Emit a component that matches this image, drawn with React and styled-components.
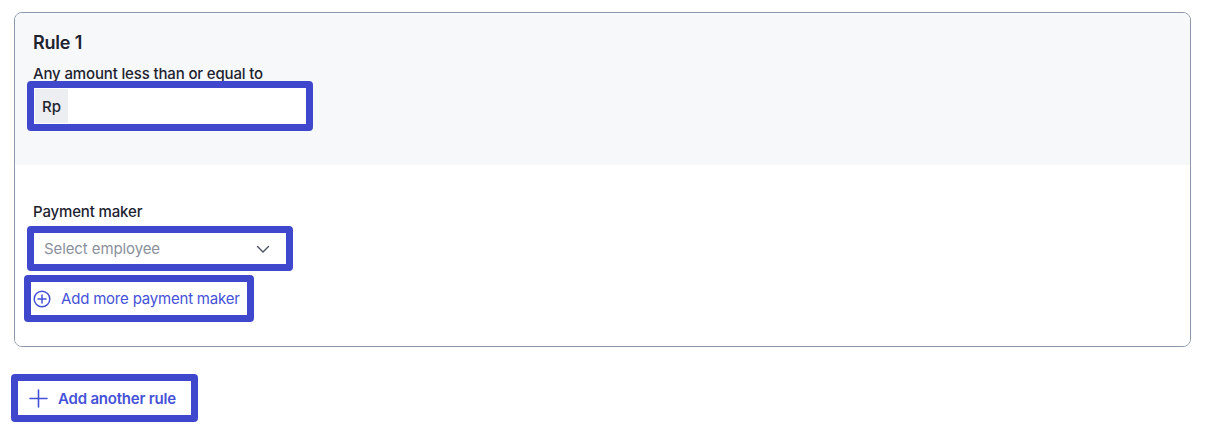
import React from "react";
import styled, { createGlobalStyle } from "styled-components";

const GlobalStyle = createGlobalStyle`
  body {
    margin: 0;
    background: #ffffff;
    font-family: Inter, "Noto Sans", sans-serif;
    color: #1e2330;
  }
`;

const Page = styled.div`
  padding: 12px 0 0 14px;
`;

const Card = styled.div`
  width: 1175px;
  border: 1px solid #8c97ab;
  border-radius: 8px;
  overflow: hidden;
`;

const Section = styled.div`
  background: ${({ muted }) => (muted ? "#f7f8fa" : "#ffffff")};
  padding: ${({ muted }) => (muted ? "19px 18px 34px" : "38px 18px 24px 9px")};
  display: flex;
  flex-direction: column;
  align-items: flex-start;
`;

const Title = styled.h2`
  margin: 0;
  font-size: 18px;
  line-height: 22px;
  font-weight: 600;
  letter-spacing: -0.2px;
  color: #1e2330;
`;

const Label = styled.div`
  font-size: 15px;
  line-height: 18px;
  font-weight: 500;
  letter-spacing: -0.15px;
  color: #1e2330;
  margin: ${({ top }) => top || 0}px 0 0 ${({ left }) => left || 0}px;
`;

const Highlight = styled.div`
  box-sizing: border-box;
  border: 7px solid #3f47cc;
  border-radius: 4px;
  width: ${({ w }) => w}px;
  height: ${({ h }) => h}px;
  margin: ${({ top }) => top || 0}px 0 0 ${({ left }) => left || 0}px;
  display: flex;
  background: #ffffff;
`;

const Prefix = styled.div`
  width: 33px;
  margin: 1px 0 1px 1px;
  background: #eceef1;
  display: flex;
  align-items: center;
  justify-content: center;
  font-size: 15px;
  font-weight: 500;
  color: #1e2330;
`;

const Select = styled.div`
  flex: 1;
  display: flex;
  align-items: center;
  justify-content: space-between;
  padding: 0 16px 0 10px;
  font-size: 15px;
  letter-spacing: -0.1px;
  color: #8a909c;
`;

const LinkButton = styled.button`
  flex: 1;
  display: flex;
  align-items: center;
  gap: ${({ gap }) => gap}px;
  padding: 0 0 0 ${({ pad }) => pad}px;
  border: none;
  background: none;
  font-family: inherit;
  font-size: 15px;
  letter-spacing: -0.2px;
  font-weight: ${({ strong }) => (strong ? 600 : 400)};
  color: #4552d8;
  cursor: pointer;
`;

const Footer = styled.div`
  padding: 27px 0 0 11px;
`;

const Chevron = () => (
  <svg width="14" height="14" viewBox="0 0 14 14" fill="none">
    <path d="M1.5 4.5 7 10l5.5-5.5" stroke="#4a5060" strokeWidth="1.4" strokeLinecap="round" strokeLinejoin="round" />
  </svg>
);

const CirclePlus = () => (
  <svg width="18" height="18" viewBox="0 0 18 18" fill="none">
    <circle cx="9" cy="9" r="7.8" stroke="#4552d8" strokeWidth="1.5" />
    <path d="M9 5v8M5 9h8" stroke="#4552d8" strokeWidth="1.5" strokeLinecap="round" />
  </svg>
);

const Plus = () => (
  <svg width="19" height="19" viewBox="0 0 19 19" fill="none">
    <path d="M9.5 1v17M1 9.5h17" stroke="#4552d8" strokeWidth="1.6" strokeLinecap="round" />
  </svg>
);

export default function App() {
  return (
    <Page>
      <GlobalStyle />
      <Card>
        <Section muted>
          <Title>Rule 1</Title>
          <Label top={11}>Any amount less than or equal to</Label>
          <Highlight w={286} h={50} top={-2} left={-6}>
            <Prefix>Rp</Prefix>
          </Highlight>
        </Section>
        <Section>
          <Label left={9}>Payment maker</Label>
          <Highlight w={266} h={45} top={5} left={3}>
            <Select>
              Select employee
              <Chevron />
            </Select>
          </Highlight>
          <Highlight w={230} h={47} top={4}>
            <LinkButton pad={2} gap={10}>
              <CirclePlus />
              Add more payment maker
            </LinkButton>
          </Highlight>
        </Section>
      </Card>
      <Footer>
        <Highlight w={187} h={48} left={-14}>
          <LinkButton pad={11} gap={10} strong>
            <Plus />
            Add another rule
          </LinkButton>
        </Highlight>
      </Footer>
    </Page>
  );
}
